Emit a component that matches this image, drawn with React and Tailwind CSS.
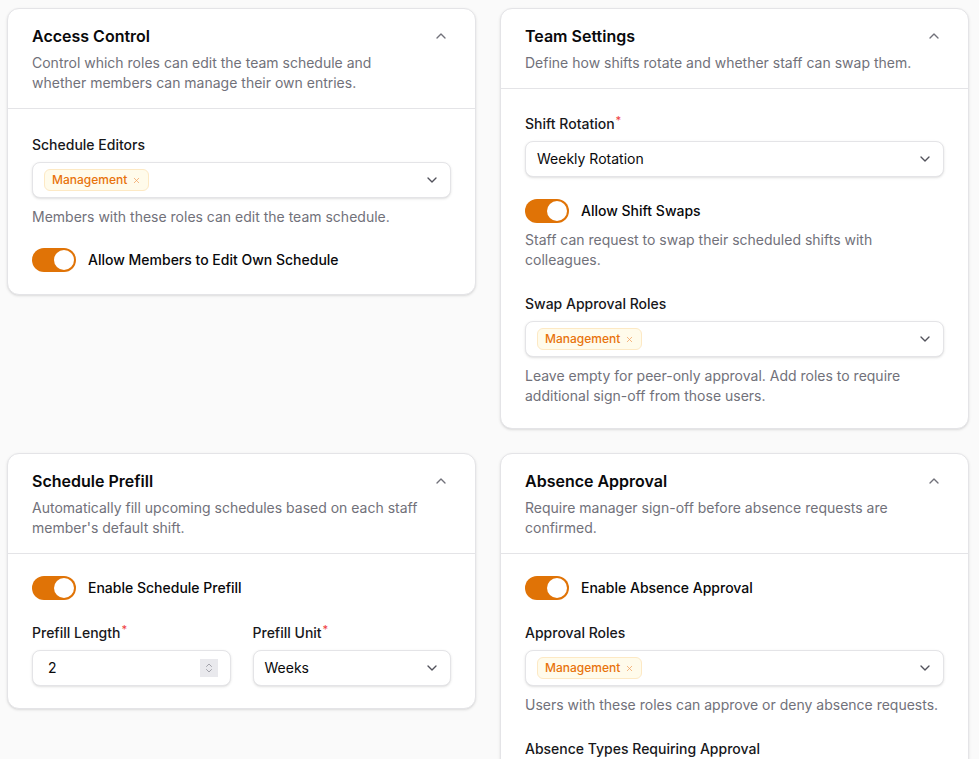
import React from "react";
import { ChevronUp, ChevronDown, X, ChevronsUpDown } from "lucide-react";

function Card({ title, desc, bodyTop = "pt-[25px]", children }) {
  return (
    <div className="bg-white rounded-xl border border-[#e4e4e7] shadow-sm">
      <div className="px-6 pt-[15px] pb-[15px] border-b border-[#e4e4e7]">
        <div className="flex items-center justify-between">
          <h2 className="text-base leading-6 font-semibold text-[#09090b]">{title}</h2>
          <ChevronUp size={16} strokeWidth={2} className="text-[#71717a] mr-[2px]" />
        </div>
        <p className="mt-[5px] max-w-[390px] text-sm leading-5 text-[#71717a]">{desc}</p>
      </div>
      <div className={`px-6 pb-[22px] flex flex-col ${bodyTop}`}>{children}</div>
    </div>
  );
}

function Label({ children, required }) {
  return (
    <div className="text-sm leading-5 font-medium text-[#18181b] mb-[7px]">
      {children}
      {required && <span className="text-[#ef4444] text-[11px] align-top relative top-[-4px] ml-[1px]">*</span>}
    </div>
  );
}

function Tag() {
  return (
    <span className="inline-flex items-center gap-[5px] h-[22px] pl-[7px] pr-[7px] rounded-md bg-[#fffbeb] border border-[#fde9c4] text-xs text-[#e8730c] font-medium">
      Management
      <X size={9} strokeWidth={2} className="text-[#f0a060]" />
    </span>
  );
}

function MultiSelect() {
  return (
    <div className="h-9 rounded-lg border border-[#e4e4e7] shadow-sm flex items-center justify-between pl-[11px] pr-[10px] bg-white">
      <Tag />
      <ChevronDown size={16} strokeWidth={2} className="text-[#52525b]" />
    </div>
  );
}

function Select({ value }) {
  return (
    <div className="h-9 rounded-lg border border-[#e4e4e7] shadow-sm flex items-center justify-between pl-[11px] pr-[10px] bg-white">
      <span className="text-sm text-[#09090b]">{value}</span>
      <ChevronDown size={16} strokeWidth={2} className="text-[#52525b]" />
    </div>
  );
}

function Toggle({ label }) {
  return (
    <div className="flex items-center gap-3">
      <div className="w-11 h-6 rounded-full bg-[#e07306] flex items-center justify-end pr-[2px]">
        <div className="w-5 h-5 rounded-full bg-white" />
      </div>
      <span className="text-sm leading-5 font-medium text-[#09090b]">{label}</span>
    </div>
  );
}

function Help({ children }) {
  return <p className="mt-[9px] text-sm leading-5 text-[#71717a]">{children}</p>;
}

export default function App() {
  return (
    <div className="min-h-screen bg-[#fafafa] pl-[7px] pr-[10px] pt-2 pb-8" style={{ fontFamily: "Inter, 'Noto Sans', sans-serif" }}>
      <div className="grid grid-cols-2 gap-x-6 gap-y-6 items-start">
        <Card
          title="Access Control"
          desc="Control which roles can edit the team schedule and whether members can manage their own entries."
          bodyTop="pt-[26px]"
        >
          <Label>Schedule Editors</Label>
          <MultiSelect />
          <Help>Members with these roles can edit the team schedule.</Help>
          <div className="mt-[21px]">
            <Toggle label="Allow Members to Edit Own Schedule" />
          </div>
        </Card>

        <Card title="Team Settings" desc="Define how shifts rotate and whether staff can swap them.">
          <Label required>Shift Rotation</Label>
          <Select value="Weekly Rotation" />
          <div className="mt-[22px]">
            <Toggle label="Allow Shift Swaps" />
          </div>
          <p className="mt-[7px] text-sm leading-5 text-[#71717a] pr-16">
            Staff can request to swap their scheduled shifts with colleagues.
          </p>
          <div className="mt-6">
            <Label>Swap Approval Roles</Label>
            <MultiSelect />
            <Help>Leave empty for peer-only approval. Add roles to require additional sign-off from those users.</Help>
          </div>
        </Card>

        <Card
          title="Schedule Prefill"
          desc="Automatically fill upcoming schedules based on each staff member's default shift."
          bodyTop="pt-[22px]"
        >
          <Toggle label="Enable Schedule Prefill" />
          <div className="mt-[23px] grid grid-cols-2 gap-[22px]">
            <div>
              <Label required>Prefill Length</Label>
              <div className="h-9 rounded-lg border border-[#e4e4e7] shadow-sm flex items-center justify-between pl-[15px] pr-[12px] bg-white">
                <span className="text-sm text-[#09090b]">2</span>
                <div className="w-[18px] h-[18px] bg-[#e9e9ed] flex items-center justify-center">
                  <ChevronsUpDown size={12} strokeWidth={1.5} className="text-[#8a8a93]" />
                </div>
              </div>
            </div>
            <div>
              <Label required>Prefill Unit</Label>
              <Select value="Weeks" />
            </div>
          </div>
        </Card>

        <Card
          title="Absence Approval"
          desc="Require manager sign-off before absence requests are confirmed."
          bodyTop="pt-[22px]"
        >
          <Toggle label="Enable Absence Approval" />
          <div className="mt-[23px]">
            <Label>Approval Roles</Label>
            <MultiSelect />
            <Help>Users with these roles can approve or deny absence requests.</Help>
          </div>
          <div className="mt-6">
            <Label>Absence Types Requiring Approval</Label>
            <MultiSelect />
          </div>
        </Card>
      </div>
    </div>
  );
}
